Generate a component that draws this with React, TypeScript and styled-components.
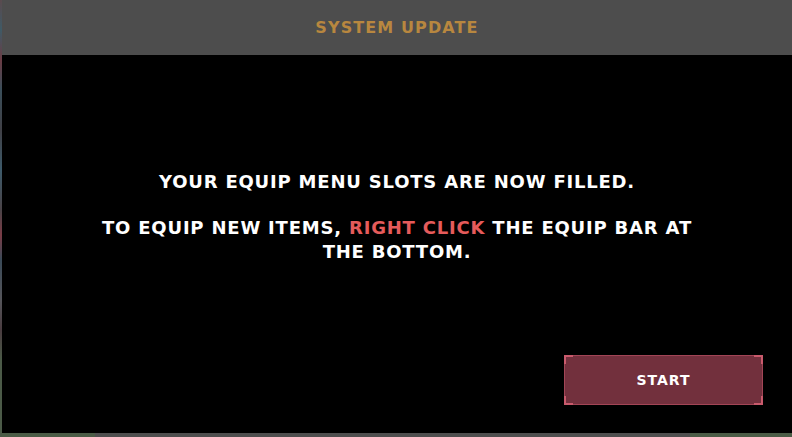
import styled, { createGlobalStyle } from "styled-components";

const GlobalStyle = createGlobalStyle`
  html, body {
    margin: 0;
    padding: 0;
    background: #000;
  }
  body {
    width: 792px;
    height: 437px;
    overflow: hidden;
    font-family: "DejaVu Sans", "Liberation Sans", sans-serif;
  }
`;

const Backdrop = styled.div`
  width: 792px;
  height: 437px;
  padding-left: 2px;
  box-sizing: border-box;
  background:
    linear-gradient(
        180deg,
        #5a4a4e 0px,
        #3f5a66 30px,
        #6a3c44 60px,
        #3a4e5a 90px,
        #404046 130px,
        #3d5a6a 170px,
        #4a4347 210px,
        #7a3c46 235px,
        #3a4a58 260px,
        #55555a 300px,
        #4a3c40 330px,
        #4b5a47 360px
      )
      left top / 2px 100% no-repeat,
    linear-gradient(
      90deg,
      #4b5c46 0px,
      #4b5c46 95px,
      #4f4f4f 95px,
      #4f4f4f 690px,
      #4b5c46 690px
    );
`;

const Panel = styled.div`
  height: 433px;
  background: #000;
  display: flex;
  flex-direction: column;
`;

const Header = styled.div`
  height: 55px;
  flex-shrink: 0;
  background: #4d4d4d;
  display: flex;
  align-items: center;
  justify-content: center;
`;

const Title = styled.h1`
  margin: 0;
  font-size: 16px;
  font-weight: 700;
  letter-spacing: 1.1px;
  color: #b8873f;
`;

const Body = styled.div`
  flex: 1;
  display: flex;
  flex-direction: column;
  padding: 115px 29px 28px 0;
`;

const Message = styled.div`
  align-self: center;
  width: 604px;
  margin-left: 29px;
  display: flex;
  flex-direction: column;
  gap: 22px;
  text-align: center;
  color: #fff;
  font-size: 18px;
  font-weight: 700;
  letter-spacing: 0.8px;
  line-height: 24px;
`;

const Line = styled.p`
  margin: 0;
`;

const Highlight = styled.span`
  color: #e55b5b;
`;

const Footer = styled.div`
  margin-top: auto;
  align-self: flex-end;
`;

const Button = styled.button`
  position: relative;
  width: 199px;
  height: 50px;
  background: #72303d;
  border: 1px solid #a24556;
  color: #fff;
  font-family: inherit;
  font-size: 14px;
  font-weight: 700;
  letter-spacing: 1px;
  cursor: pointer;
`;

const Corner = styled.span<{ $v: "top" | "bottom"; $h: "left" | "right" }>`
  position: absolute;
  width: 7px;
  height: 7px;
  ${(p) => p.$v}: -1px;
  ${(p) => p.$h}: -1px;
  border-${(p) => p.$v}: 2px solid #c95a6c;
  border-${(p) => p.$h}: 2px solid #c95a6c;
`;

export default function App() {
  return (
    <>
      <GlobalStyle />
      <Backdrop>
        <Panel>
          <Header>
            <Title>SYSTEM UPDATE</Title>
          </Header>
          <Body>
            <Message>
              <Line>YOUR EQUIP MENU SLOTS ARE NOW FILLED.</Line>
              <Line>
                TO EQUIP NEW ITEMS, <Highlight>RIGHT CLICK</Highlight> THE EQUIP
                BAR AT THE BOTTOM.
              </Line>
            </Message>
            <Footer>
              <Button>
                <Corner $v="top" $h="left" />
                <Corner $v="top" $h="right" />
                <Corner $v="bottom" $h="left" />
                <Corner $v="bottom" $h="right" />
                START
              </Button>
            </Footer>
          </Body>
        </Panel>
      </Backdrop>
    </>
  );
}
